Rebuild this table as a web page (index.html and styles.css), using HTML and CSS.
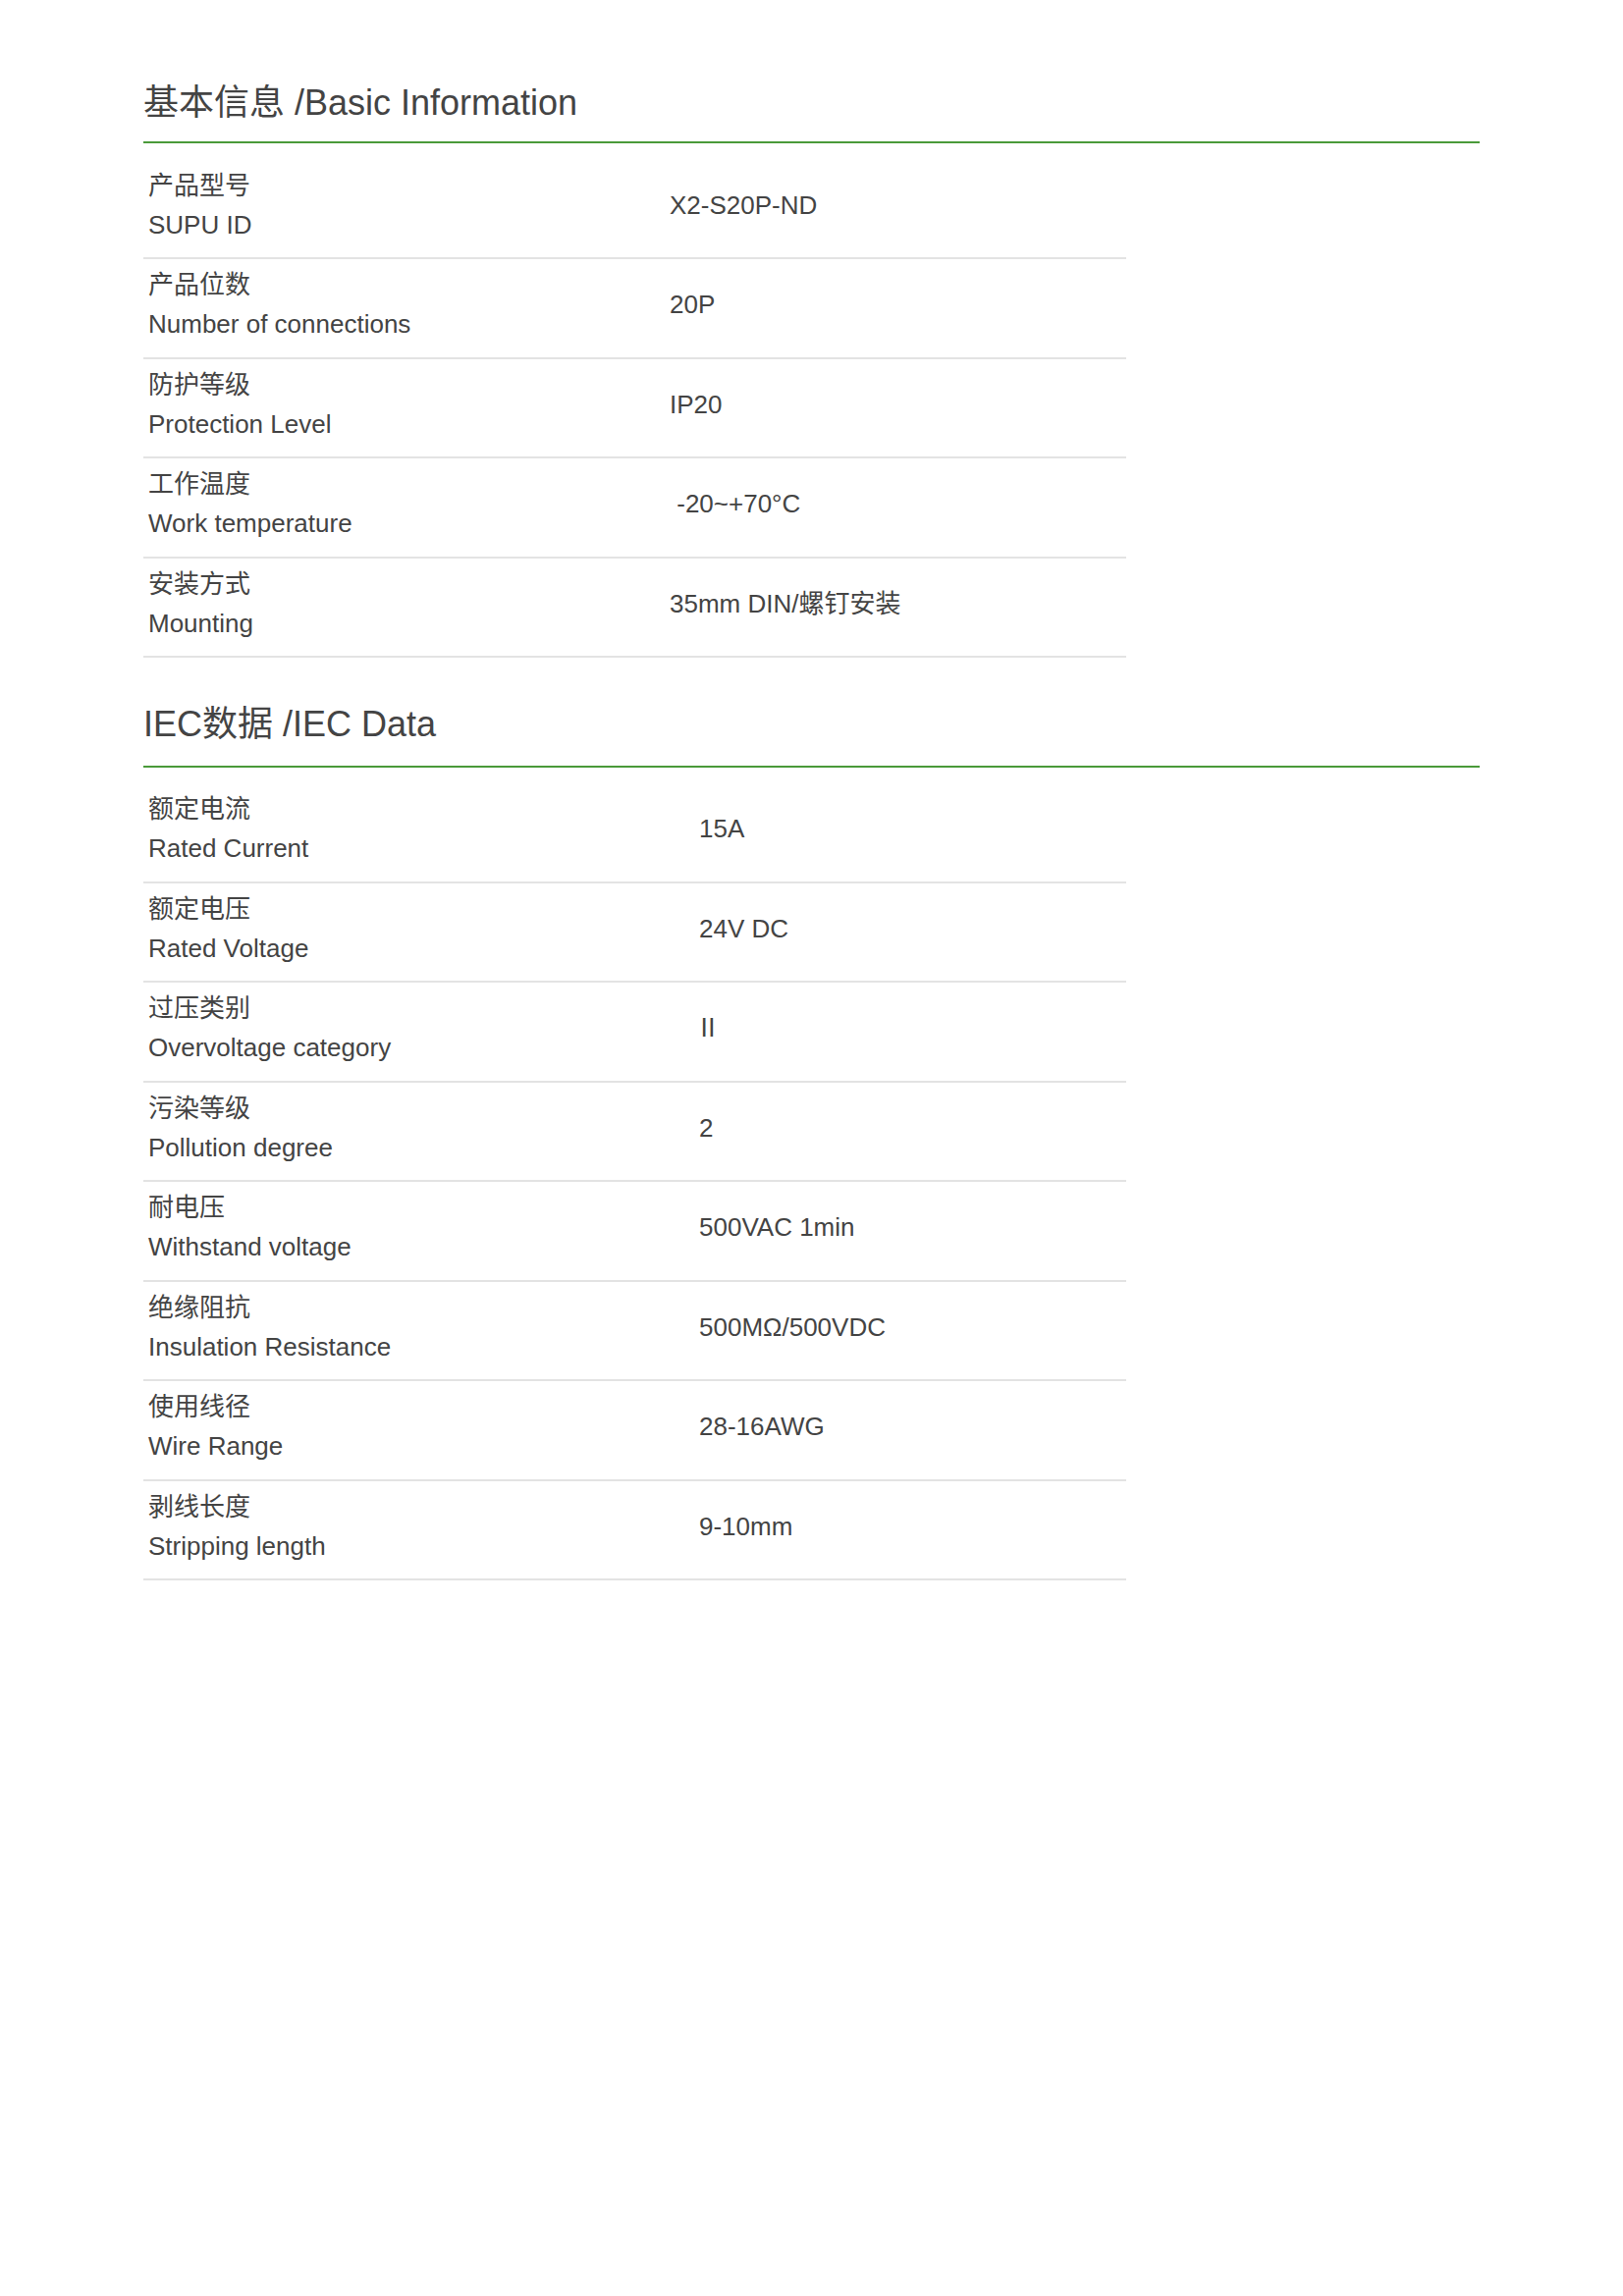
FILE: index.html
```html
<!DOCTYPE html>
<html lang="zh-CN">
<head>
<meta charset="utf-8">
<title>Spec</title>
<link rel="stylesheet" href="styles.css">
</head>
<body>
<div class="page">
  <section class="section">
    <h2 class="title">基本信息 /Basic Information</h2>
    <div class="rule"></div>
    <div class="table t1">
      <div class="row"><div class="label"><div>产品型号</div><div>SUPU ID</div></div><div class="value">X2-S20P-ND</div></div>
      <div class="row"><div class="label"><div>产品位数</div><div>Number of connections</div></div><div class="value">20P</div></div>
      <div class="row"><div class="label"><div>防护等级</div><div>Protection Level</div></div><div class="value">IP20</div></div>
      <div class="row"><div class="label"><div>工作温度</div><div>Work temperature</div></div><div class="value">&nbsp;-20~+70°C</div></div>
      <div class="row"><div class="label"><div>安装方式</div><div>Mounting</div></div><div class="value">35mm DIN/螺钉安装</div></div>
    </div>
  </section>
  <section class="section s2">
    <h2 class="title">IEC数据 /IEC Data</h2>
    <div class="rule"></div>
    <div class="table t2">
      <div class="row"><div class="label"><div>额定电流</div><div>Rated Current</div></div><div class="value">15A</div></div>
      <div class="row"><div class="label"><div>额定电压</div><div>Rated Voltage</div></div><div class="value">24V DC</div></div>
      <div class="row"><div class="label"><div>过压类别</div><div>Overvoltage category</div></div><div class="value roman">Ⅱ</div></div>
      <div class="row"><div class="label"><div>污染等级</div><div>Pollution degree</div></div><div class="value">2</div></div>
      <div class="row"><div class="label"><div>耐电压</div><div>Withstand voltage</div></div><div class="value">500VAC 1min</div></div>
      <div class="row"><div class="label"><div>绝缘阻抗</div><div>Insulation Resistance</div></div><div class="value">500MΩ/500VDC</div></div>
      <div class="row"><div class="label"><div>使用线径</div><div>Wire Range</div></div><div class="value">28-16AWG</div></div>
      <div class="row"><div class="label"><div>剥线长度</div><div>Stripping length</div></div><div class="value">9-10mm</div></div>
    </div>
  </section>
</div>
</body>
</html>
```

FILE: styles.css
```css
html, body {
  margin: 0;
  padding: 0;
  background: #ffffff;
}
body {
  font-family: "Liberation Sans", Arial, "Noto Sans CJK SC", sans-serif;
  color: #444444;
}
.page {
  padding: 71px 146px 0 146px;
  width: 1361px;
}
.section {
  display: flex;
  flex-direction: column;
}
.s2 {
  margin-top: 34px;
}
.title {
  margin: 0;
  font-weight: normal;
  font-size: 36px;
  line-height: 68px;
  color: #444444;
}
.rule {
  margin-top: 5px;
  height: 2px;
  background: #4a9a3a;
}
.s2 .rule {
  margin-top: 8px;
}
.table {
  width: 1001px;
  margin-top: 16.5px;
  display: flex;
  flex-direction: column;
}
.t2 {
  margin-top: 16px;
}
.row {
  display: flex;
  align-items: center;
  padding: 6px 0 13.5px 5px;
  border-bottom: 2px solid #e3e3e3;
}
.label {
  font-size: 26px;
  line-height: 40px;
  display: flex;
  flex-direction: column;
}
.t1 .label { width: 531px; }
.t2 .label { width: 561px; }
.value {
  font-size: 26px;
  line-height: 40px;
}
.roman {
  margin-left: -4px;
}
```
